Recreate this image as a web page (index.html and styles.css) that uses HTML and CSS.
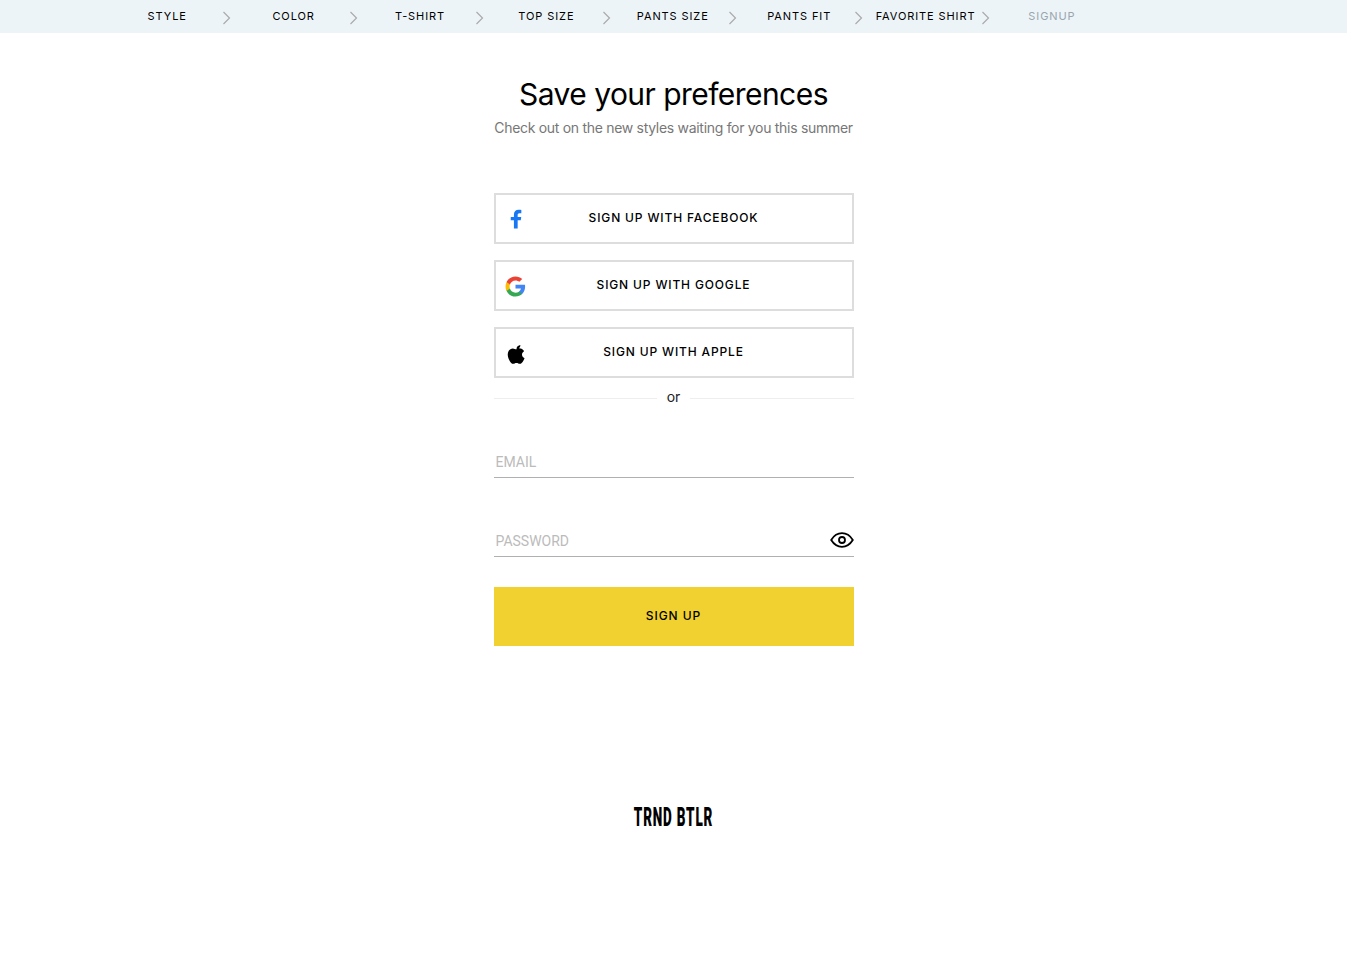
FILE: index.html
```html
<!DOCTYPE html>
<html lang="en">
<head>
<meta charset="utf-8">
<title>Save your preferences</title>
<link rel="stylesheet" href="styles.css">
</head>
<body>
<nav class="steps">
  <div class="step"><span class="step-label">STYLE</span><svg class="chev" viewBox="0 0 8 14"><path d="M1 1l6 6-6 6"/></svg></div>
  <div class="step"><span class="step-label">COLOR</span><svg class="chev" viewBox="0 0 8 14"><path d="M1 1l6 6-6 6"/></svg></div>
  <div class="step"><span class="step-label">T-SHIRT</span><svg class="chev" viewBox="0 0 8 14"><path d="M1 1l6 6-6 6"/></svg></div>
  <div class="step"><span class="step-label">TOP SIZE</span><svg class="chev" viewBox="0 0 8 14"><path d="M1 1l6 6-6 6"/></svg></div>
  <div class="step"><span class="step-label">PANTS SIZE</span><svg class="chev" viewBox="0 0 8 14"><path d="M1 1l6 6-6 6"/></svg></div>
  <div class="step"><span class="step-label">PANTS FIT</span><svg class="chev" viewBox="0 0 8 14"><path d="M1 1l6 6-6 6"/></svg></div>
  <div class="step"><span class="step-label">FAVORITE SHIRT</span><svg class="chev" viewBox="0 0 8 14"><path d="M1 1l6 6-6 6"/></svg></div>
  <div class="step step-current"><span class="step-label">SIGNUP</span></div>
</nav>
<main class="panel">
  <h1 class="title">Save your preferences</h1>
  <p class="subtitle">Check out on the new styles waiting for you this summer</p>
  <div class="socials">
    <button class="social">
      <svg class="social-icon" viewBox="0 0 24 24"><path fill="#1877f2" d="M14 23.500v-10h3.700l.6-4h-4.300V7.200c0-1.200.5-2.100 2.300-2.100h2.100V1.200C17.800 1.100 16.500 1 15.300 1c-3.600 0-5.800 2.100-5.800 5.800v2.700H5.700v4h3.800v10z"/></svg>
      SIGN UP WITH FACEBOOK
    </button>
    <button class="social">
      <svg class="social-icon icon-google" viewBox="0 0 24 24">
        <path fill="#4285f4" d="M23 12.300c0-.8-.1-1.600-.2-2.300H12v4.300h6.200c-.3 1.400-1.100 2.600-2.300 3.400v2.800h3.700c2.100-2 3.400-4.900 3.400-8.200z"/>
        <path fill="#34a853" d="M12 23.500c3.100 0 5.700-1 7.600-2.800l-3.700-2.800c-1 .7-2.300 1.100-3.900 1.100-3 0-5.500-2-6.400-4.700H1.800v2.900c1.900 3.800 5.800 6.300 10.200 6.300z"/>
        <path fill="#fbbc05" d="M5.600 14.300c-.2-.7-.4-1.500-.4-2.300s.1-1.600.4-2.300V6.800H1.800C1 8.300.6 10.100.6 12s.4 3.700 1.200 5.200z"/>
        <path fill="#ea4335" d="M12 5c1.700 0 3.200.6 4.400 1.700l3.300-3.300C17.700 1.600 15.100.5 12 .5 7.500.5 3.700 3 1.800 6.800l3.800 2.900C6.500 7 9 5 12 5z"/>
      </svg>
      SIGN UP WITH GOOGLE
    </button>
    <button class="social">
      <svg class="social-icon icon-apple" viewBox="0 0 24 24"><path fill="#000" d="M16.400 1c.1 1.300-.4 2.500-1.100 3.400-.8 1-2 1.700-3.200 1.600-.2-1.200.4-2.500 1.100-3.300C14 1.800 15.300 1.100 16.400 1zM20.600 8.200c-1.500.9-2.400 2.300-2.300 3.900 0 1.900 1.100 3.400 2.900 4.200-.4 1.200-1 2.400-1.700 3.400-1 1.500-2.100 3-3.700 3-1.500 0-2-.9-3.800-.9s-2.400.9-3.800.9c-1.600.1-2.800-1.600-3.800-3.100-2-2.900-3.500-8.100-1.400-11.700 1-1.800 2.900-2.900 4.800-2.900 1.500 0 2.900 1 3.800 1s2.500-1.200 4.300-1c.7 0 2.900.3 4.300 2.400z"/></svg>
      SIGN UP WITH APPLE
    </button>
  </div>
  <div class="divider"><span class="divider-text">or</span></div>
  <div class="field field-email"><input class="input" type="text" placeholder="EMAIL"></div>
  <div class="field field-password">
    <input class="input" type="password" placeholder="PASSWORD">
    <svg class="eye" viewBox="0 0 24 16"><path d="M1.200 8C4 3.500 7.800 1.200 12 1.200S20 3.500 22.800 8C20 12.500 16.200 14.800 12 14.800S4 12.500 1.200 8z"/><circle cx="12" cy="8" r="3"/></svg>
  </div>
  <button class="submit">SIGN UP</button>
  <div class="logo">TRND BTLR</div>
</main>
</body>
</html>
```
FILE: styles.css
```css
* { box-sizing: border-box; }
html, body { margin: 0; padding: 0; background: #fff; }
body { font-family: Inter, "Liberation Sans", sans-serif; color: #000; height: 955px; overflow: hidden; }

.steps {
  height: 33px;
  background: #edf4f7;
  padding-left: 104px;
  display: grid;
  grid-template-columns: repeat(8, 126.4px);
}
.step { position: relative; display: flex; justify-content: center; padding-top: 10px; }
.step-label { font-size: 11px; line-height: 13px; letter-spacing: .9px; color: #000; white-space: nowrap; }
.step-current .step-label { color: #98a6b0; }
.chev { position: absolute; right: -1px; top: 11px; width: 9px; height: 14px; fill: none; stroke: #aaa; stroke-width: 1.200; }

.panel { width: 360px; margin: 0 auto; display: flex; flex-direction: column; }
.title { margin: 43px 0 0; font-size: 30px; line-height: 36px; font-weight: 400; text-align: center; letter-spacing: -.55px; white-space: nowrap; }
.subtitle { margin: 7px 0 0; font-size: 14px; line-height: 18px; color: #777; text-align: center; letter-spacing: -.3px; white-space: nowrap; }

.socials { margin-top: 56px; display: flex; flex-direction: column; gap: 16px; }
.social {
  position: relative; height: 51px; padding: 0 0 2px; background: #fff; border: 2px solid #ddd; border-radius: 0;
  font: 500 12px/14px Inter, "Liberation Sans", sans-serif; letter-spacing: .85px; color: #000; text-align: center;
}
.social-icon { position: absolute; left: 10px; top: 14px; width: 20px; height: 20px; }
.icon-google { left: 9.500px; top: 13.500px; width: 21px; height: 21px; }
.icon-apple { top: 14.500px; width: 21px; height: 21px; }

.divider { margin-top: 11px; height: 18px; display: flex; align-items: center; font-size: 14px; line-height: 18px; color: #222; }
.divider::before, .divider::after { content: ""; flex: 1; height: 1px; background: #eee; }
.divider-text { margin: 0 10px 2px 10px; }

.field { position: relative; border-bottom: 1px solid #b0b0b0; height: 30px; }
.field-email { margin-top: 41px; }
.field-password { margin-top: 49px; }
.input { display: block; width: 100%; height: 27px; padding: 0 2px; border: 0; outline: 0; background: transparent; font: 400 14px/18px Roboto, sans-serif; }
.input::placeholder { color: #bbb; opacity: 1; }
.eye { position: absolute; right: 0; top: 5px; width: 24px; height: 16px; fill: none; stroke: #000; stroke-width: 1.800; }

.submit {
  margin-top: 30px; height: 59px; padding: 0 0 2px; border: 0; border-radius: 0; background: #f0d130;
  font: 500 12px/14px Inter, "Liberation Sans", sans-serif; letter-spacing: .95px; color: #000;
}
.logo {
  margin-top: 159px; align-self: center; font: 900 25px/26px Roboto, sans-serif; letter-spacing: 1.500px;
  transform: scaleX(.54); white-space: nowrap;
}
```
